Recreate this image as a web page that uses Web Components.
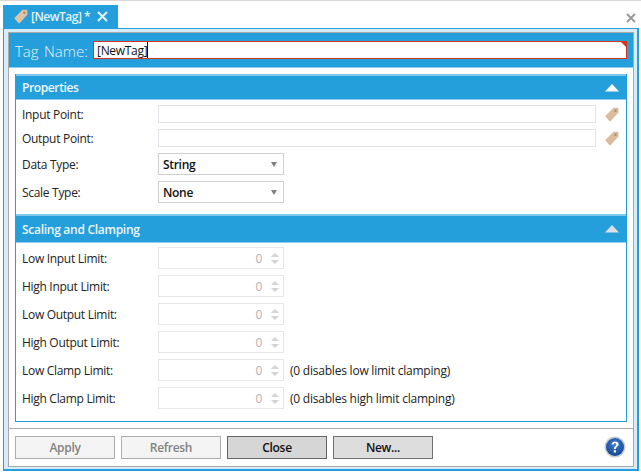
<!DOCTYPE html>
<html><head><meta charset="utf-8">
<style>
html,body{margin:0;padding:0;background:#fff}
body{width:641px;height:472px;overflow:hidden;font:12px/16px "Open Sans","Noto Sans",sans-serif;color:#222;letter-spacing:-.3px}
</style></head><body>
<tag-window>
  <tag-row label="Input Point:" slot="props"><tag-text></tag-text><tag-icon></tag-icon></tag-row>
  <tag-row label="Output Point:" slot="props"><tag-text></tag-text><tag-icon></tag-icon></tag-row>
  <tag-row label="Data Type:" slot="props"><tag-select>String</tag-select></tag-row>
  <tag-row label="Scale Type:" slot="props"><tag-select>None</tag-select></tag-row>
  <tag-row label="Low Input Limit:" slot="scale"><tag-spin></tag-spin></tag-row>
  <tag-row label="High Input Limit:" slot="scale"><tag-spin></tag-spin></tag-row>
  <tag-row label="Low Output Limit:" slot="scale"><tag-spin></tag-spin></tag-row>
  <tag-row label="High Output Limit:" slot="scale"><tag-spin></tag-spin></tag-row>
  <tag-row label="Low Clamp Limit:" slot="scale"><tag-spin></tag-spin><span style="letter-spacing:-.22px;padding-top:1px">(0 disables low limit clamping)</span></tag-row>
  <tag-row label="High Clamp Limit:" slot="scale"><tag-spin></tag-spin><span style="letter-spacing:-.22px;padding-top:1px">(0 disables high limit clamping)</span></tag-row>
  <tag-button slot="actions" state="off">Apply</tag-button>
  <tag-button slot="actions" state="off">Refresh</tag-button>
  <tag-button slot="actions" state="hot">Close</tag-button>
  <tag-button slot="actions">New...</tag-button>
</tag-window>
<script>
const TAG=(fill,hole)=>`<svg width="14" height="15" viewBox="0 0 14 15" style="display:block"><path d="M8.6 .8 12.6 .8 13.4 1.6 13.4 5.6 5.6 14.2 4.6 14.2 .6 9.8 .6 8.8Z" fill="${fill}"/><circle cx="10.4" cy="3.8" r="1.3" fill="${hole}"/></svg>`;
function def(name,css,html){
  customElements.define(name,class extends HTMLElement{
    connectedCallback(){
      if(this.shadowRoot)return;
      const r=this.attachShadow({mode:'open'});
      r.innerHTML=`<style>${css}</style>`+(typeof html==='function'?html(this):html);
    }
  });
}
def('tag-window',`
:host{display:block;width:641px;height:472px;box-sizing:border-box;border-top:1px solid #d8d8d8}
.strip{height:27px;display:flex;align-items:flex-end;justify-content:space-between;padding:0 4px 0 3px}
.tab{width:115px;height:23px;background:#259fdb;color:#e4f3fb;display:flex;align-items:center;box-sizing:border-box;padding:0 10px 0 11px;font-weight:600;gap:3px;letter-spacing:-.5px}
.tab span{white-space:pre;padding-top:1px}
.x{display:block}
.tab .x{margin-left:auto}
.x.g{margin:0 1px 5px 0}
.outer{margin:0 2px 0 3px;height:443px;box-sizing:border-box;border:1px solid #259fdb;border-width:1px 2px 2px 1px;background:#d6edf9;padding:3px 3px 2px 4px}
.inner{height:100%;box-sizing:border-box;border:1px solid #a9a9a9;background:#fff;display:flex;flex-direction:column}
.name{height:34px;flex:none;background:#259fdb;border-bottom:1px solid #8fcdec;display:flex;align-items:center;padding:0 6px;gap:5px;margin-bottom:6px}
.name label{font-size:15px;font-weight:300;color:#e3f3fb;width:73px;letter-spacing:0;word-spacing:1.5px;white-space:nowrap;padding-top:2px}
.field{flex:none;width:534px;height:18px;box-sizing:border-box;background:#fff;border:1px solid #d8341a;position:relative;color:#111;padding:0 0 0 3px;line-height:16px;display:flex;align-items:flex-start}
.field span{display:block;padding-top:1px;height:15px}
.field i{display:block;width:1px;height:16px;background:#111}
.field b{position:absolute;right:0;top:0;border-top:5px solid #d8341a;border-left:5px solid transparent}
.box{margin:0 6px;height:348px;flex:none;box-sizing:border-box;border:1px solid #259fdb;border-top:0;display:flex;flex-direction:column}
.line{height:1px;background:#aaa;margin-top:6px;flex:none}
.foot{display:flex;gap:6px;padding:7px 0 0 6px;position:relative;flex:none}
.help{position:absolute;right:7px;top:7px;display:block}
`,`
<div class="strip">
  <div class="tab">${TAG('#e0c3a6','#a98a6c')}<span>[NewTag] *</span>
    <svg class="x" width="11" height="11" viewBox="0 0 11 11"><path d="M1 1 10 10M10 1 1 10" stroke="#e8f5fc" stroke-width="1.9"/></svg></div>
  <svg class="x g" width="10" height="10" viewBox="0 0 10 10"><path d="M1 1 9 9M9 1 1 9" stroke="#9a9a9a" stroke-width="2"/></svg>
</div>
<div class="outer"><div class="inner">
  <div class="name"><label>Tag Name:</label><div class="field"><span>[NewTag]</span><i></i><b></b></div></div>
  <div class="box">
    <tag-section title="Properties" style="--h:26px;--gap:5px;--arrow:#fff"><slot name="props"></slot></tag-section>
    <tag-section title="Scaling and Clamping" style="--h:29px;--top:11px;--gap:4px;--ls:-.28px;--arrow:#dbe0e4"><slot name="scale"></slot></tag-section>
  </div>
  <div class="line"></div>
  <div class="foot"><slot name="actions"></slot>
    <svg class="help" width="22" height="22" viewBox="0 0 22 22"><defs><radialGradient id="g" cx=".5" cy=".35" r=".7"><stop offset="0" stop-color="#3f7fd0"/><stop offset="1" stop-color="#12428f"/></radialGradient></defs><circle cx="11" cy="11" r="10.5" fill="#c5ccd6"/><circle cx="11" cy="11" r="9" fill="url(#g)"/><path d="M7.6 8.4C7.8 6.4 9.2 5.4 11.1 5.4 13.2 5.4 14.6 6.6 14.6 8.3 14.6 10.6 11.9 10.7 11.9 13H9.9C9.9 10.1 12.3 10 12.3 8.4 12.3 7.6 11.8 7.2 11 7.2 10.2 7.2 9.8 7.7 9.7 8.5ZM9.8 14.2H12V16.4H9.8Z" fill="#fff"/></svg>
  </div>
</div></div>`);
def('tag-section',`
:host{display:block;margin-top:var(--top,0)}
.h{height:var(--h);box-sizing:border-box;background:#259fdb;border-top:2px solid #7fc7ea;border-bottom:1px solid #8fcdec;color:#eef8fd;font-weight:600;display:flex;align-items:center;justify-content:space-between;padding:0 7px 0 6px;letter-spacing:var(--ls,-.38px)}
.h span{padding-top:1px}
svg{display:block}
.b{display:flex;flex-direction:column;gap:6px;padding-top:var(--gap)}
`,el=>`<div class="h"><span>${el.getAttribute('title')}</span><svg width="14" height="8" viewBox="0 0 14 8"><path d="M7 0 14 7.5H0Z" style="fill:var(--arrow)"/></svg></div><div class="b"><slot></slot></div>`);
def('tag-row',`
:host{display:flex;align-items:center;padding-left:6px;font-size:12px}
label{width:136px;flex:none;white-space:nowrap;padding-top:2px}
.c{display:flex;align-items:center;flex:1;white-space:nowrap;gap:6px}
`,el=>`<label>${el.getAttribute('label')}</label><div class="c"><slot></slot></div>`);
def('tag-text',`:host{display:block;width:438px;height:18px;box-sizing:border-box;border:1px solid #e2e2e8;background:#fff;margin-right:3px}`,``);
def('tag-icon',`:host{display:block;margin-top:1px}`,TAG('#dcbb9d','#b08d6e'));
def('tag-select',`
:host{display:flex;align-items:center;justify-content:space-between;width:126px;height:22px;box-sizing:border-box;border:1px solid #d0d0d0;padding:0 6px 0 4px;font-weight:600;color:#111;background:#fff}
span{padding-top:1px}
i{border-top:5px solid #808080;border-left:3.5px solid transparent;border-right:3.5px solid transparent}
`,`<span><slot></slot></span><i></i>`);
def('tag-spin',`
:host{display:flex;align-items:center;justify-content:flex-end;width:126px;height:22px;box-sizing:border-box;border:1px solid #e6e6e6;color:#baaeb4;padding-right:4px;background:#fff}
span{margin-right:9px;padding-top:1px}
.a{display:flex;flex-direction:column;gap:3px}
i{display:block;width:0;border-left:4px solid transparent;border-right:4px solid transparent}
.u{border-bottom:4px solid #d4d4d4}.d{border-top:4px solid #d4d4d4}
`,`<span>0</span><div class="a"><i class="u"></i><i class="d"></i></div>`);
def('tag-button',`
:host{display:flex;align-items:center;justify-content:center;width:100px;height:23px;box-sizing:border-box;border:1px solid #707070;background:#dddddd;color:#111;font-weight:600;padding-top:1px}
:host([state=off]){border-color:#adadad;background:#f4f4f4;color:#838383}
:host([state=hot]){background:#d6d6d6;border-color:#666}
`,`<slot></slot>`);
</script>
</body></html>
